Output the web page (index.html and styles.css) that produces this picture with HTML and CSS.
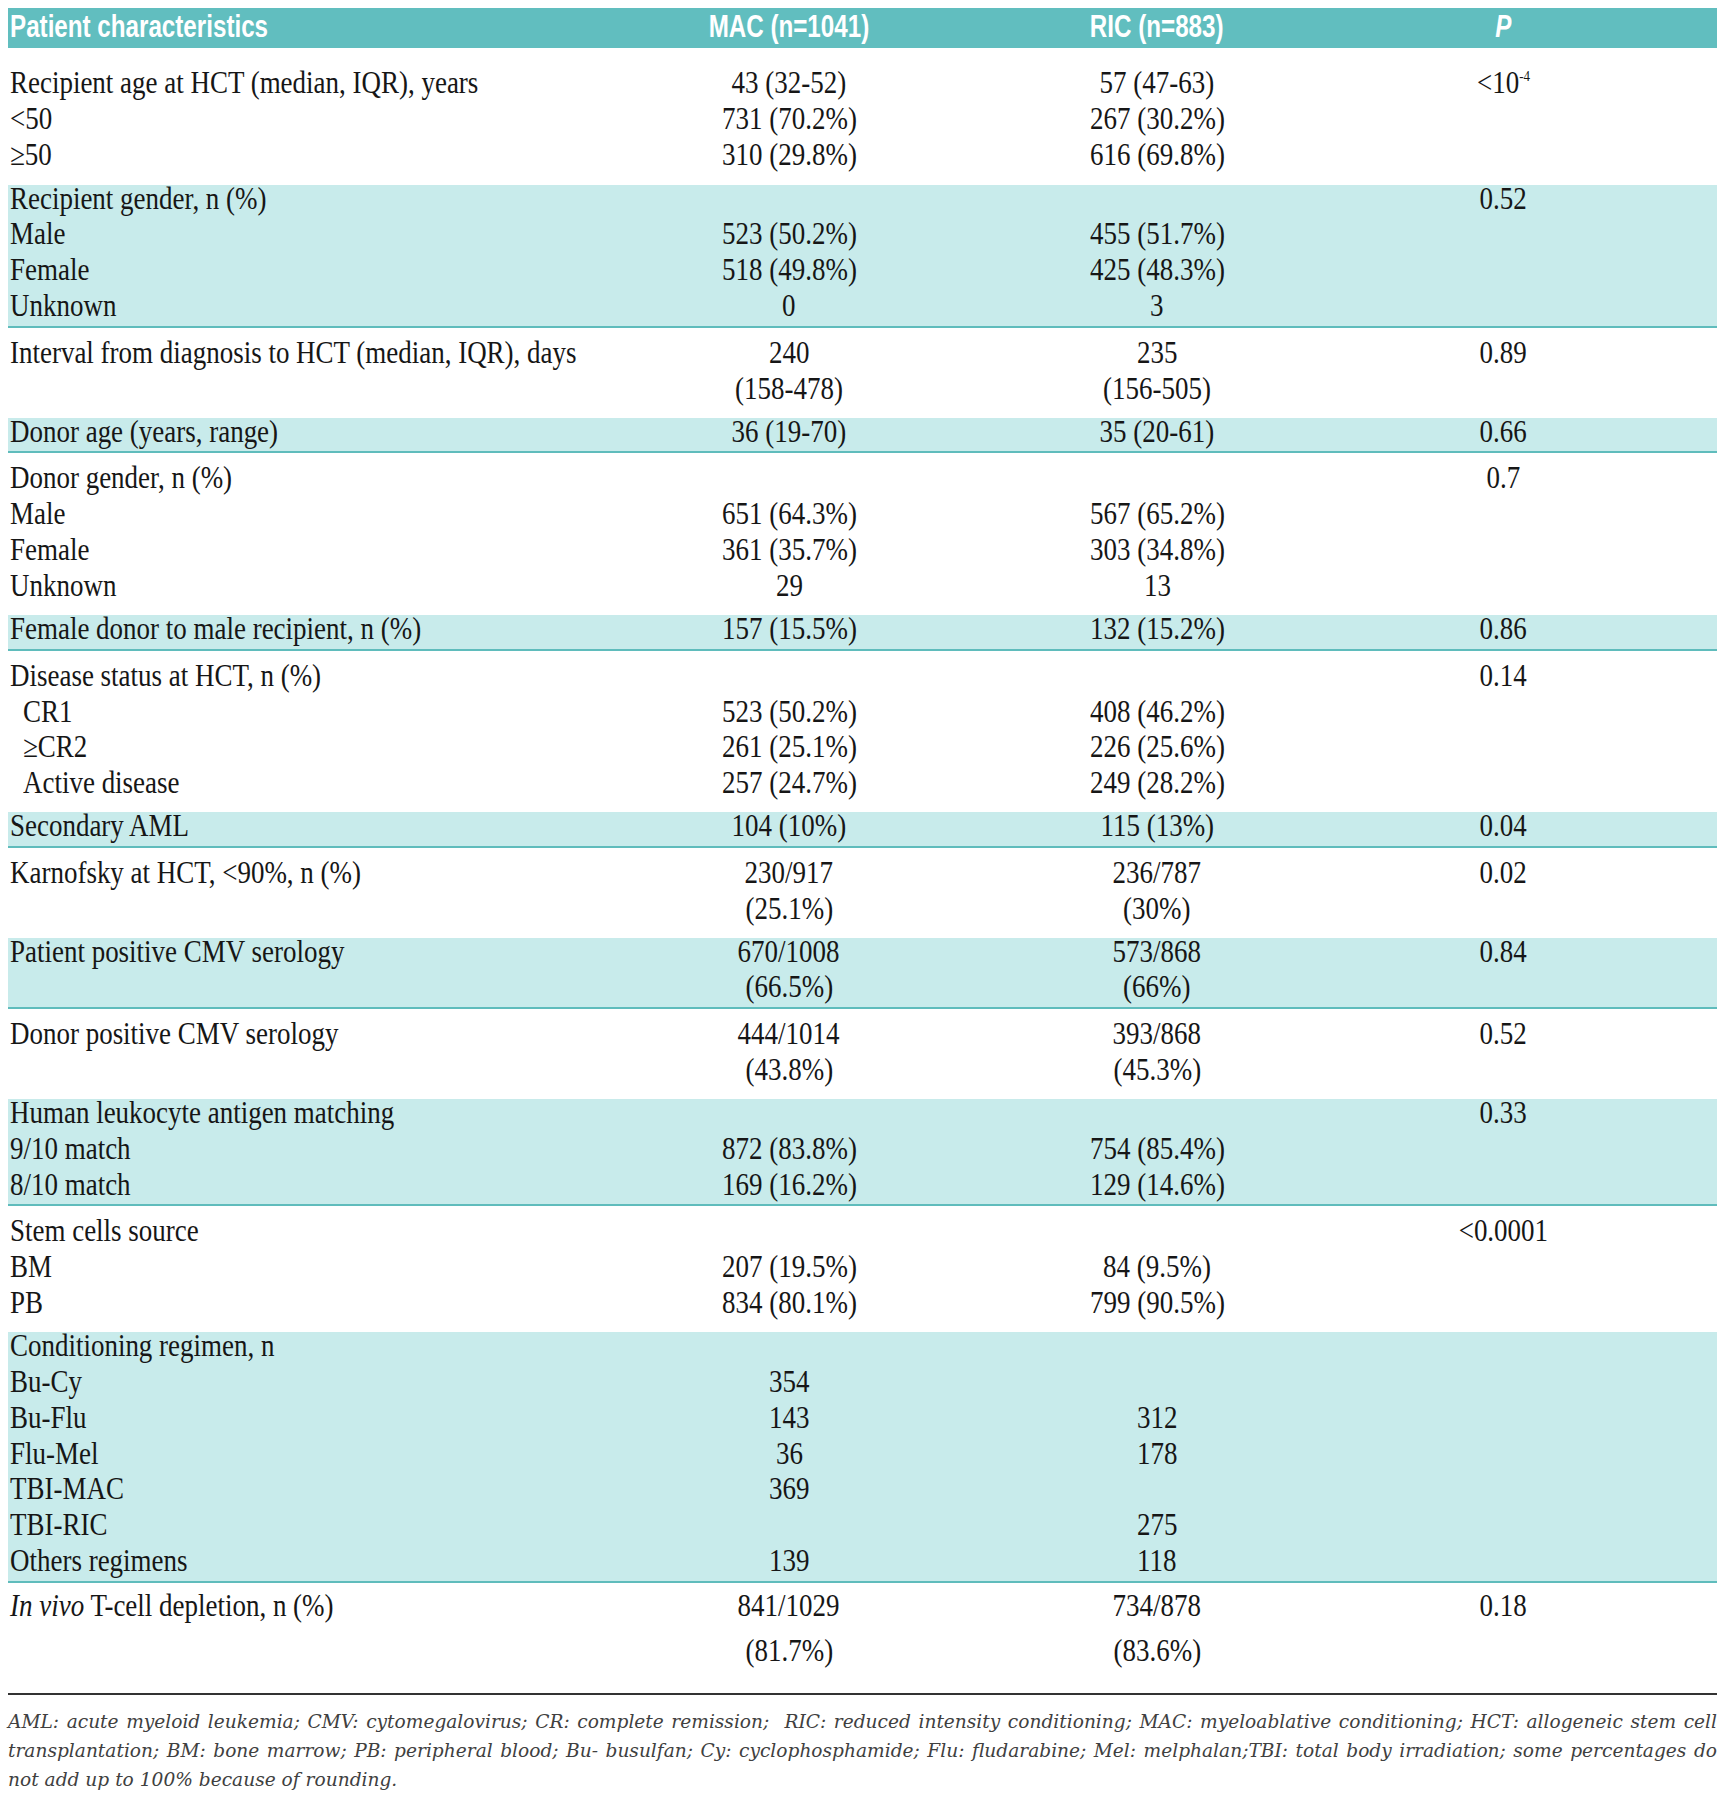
FILE: index.html
```html
<!DOCTYPE html>
<html lang="en">
<head>
<meta charset="utf-8">
<title>Patient characteristics</title>
<link rel="stylesheet" href="styles.css">
</head>
<body>
<div class="page">
  <div class="thead">
    <div class="hc lab"><span class="hs">Patient characteristics</span></div>
    <div class="hc"><span class="hs">MAC (n=1041)</span></div>
    <div class="hc"><span class="hs">RIC (n=883)</span></div>
    <div class="hc"><span class="hs"><i>P</i></span></div>
  </div>

  <div class="grp first">
    <div class="col lab">
      <div class="ln"><span class="t">Recipient age at HCT (median, IQR), years</span></div>
      <div class="ln"><span class="t">&lt;50</span></div>
      <div class="ln"><span class="t">≥50</span></div>
    </div>
    <div class="col">
      <div class="ln"><span class="t">43 (32-52)</span></div>
      <div class="ln"><span class="t">731 (70.2%)</span></div>
      <div class="ln"><span class="t">310 (29.8%)</span></div>
    </div>
    <div class="col">
      <div class="ln"><span class="t">57 (47-63)</span></div>
      <div class="ln"><span class="t">267 (30.2%)</span></div>
      <div class="ln"><span class="t">616 (69.8%)</span></div>
    </div>
    <div class="col">
      <div class="ln"><span class="t">&lt;10<sup>-4</sup></span></div>
    </div>
  </div>

  <div class="grp band">
    <div class="col lab">
      <div class="ln"><span class="t">Recipient gender, n (%)</span></div>
      <div class="ln"><span class="t">Male</span></div>
      <div class="ln"><span class="t">Female</span></div>
      <div class="ln"><span class="t">Unknown</span></div>
    </div>
    <div class="col">
      <div class="ln"></div>
      <div class="ln"><span class="t">523 (50.2%)</span></div>
      <div class="ln"><span class="t">518 (49.8%)</span></div>
      <div class="ln"><span class="t">0</span></div>
    </div>
    <div class="col">
      <div class="ln"></div>
      <div class="ln"><span class="t">455 (51.7%)</span></div>
      <div class="ln"><span class="t">425 (48.3%)</span></div>
      <div class="ln"><span class="t">3</span></div>
    </div>
    <div class="col">
      <div class="ln"><span class="t">0.52</span></div>
    </div>
  </div>

  <div class="grp plain">
    <div class="col lab">
      <div class="ln"><span class="t">Interval from diagnosis to HCT (median, IQR), days</span></div>
    </div>
    <div class="col">
      <div class="ln"><span class="t">240</span></div>
      <div class="ln"><span class="t">(158-478)</span></div>
    </div>
    <div class="col">
      <div class="ln"><span class="t">235</span></div>
      <div class="ln"><span class="t">(156-505)</span></div>
    </div>
    <div class="col">
      <div class="ln"><span class="t">0.89</span></div>
    </div>
  </div>

  <div class="grp band">
    <div class="col lab"><div class="ln"><span class="t">Donor age (years, range)</span></div></div>
    <div class="col"><div class="ln"><span class="t">36 (19-70)</span></div></div>
    <div class="col"><div class="ln"><span class="t">35 (20-61)</span></div></div>
    <div class="col"><div class="ln"><span class="t">0.66</span></div></div>
  </div>

  <div class="grp plain">
    <div class="col lab">
      <div class="ln"><span class="t">Donor gender, n (%)</span></div>
      <div class="ln"><span class="t">Male</span></div>
      <div class="ln"><span class="t">Female</span></div>
      <div class="ln"><span class="t">Unknown</span></div>
    </div>
    <div class="col">
      <div class="ln"></div>
      <div class="ln"><span class="t">651 (64.3%)</span></div>
      <div class="ln"><span class="t">361 (35.7%)</span></div>
      <div class="ln"><span class="t">29</span></div>
    </div>
    <div class="col">
      <div class="ln"></div>
      <div class="ln"><span class="t">567 (65.2%)</span></div>
      <div class="ln"><span class="t">303 (34.8%)</span></div>
      <div class="ln"><span class="t">13</span></div>
    </div>
    <div class="col">
      <div class="ln"><span class="t">0.7</span></div>
    </div>
  </div>

  <div class="grp band">
    <div class="col lab"><div class="ln"><span class="t">Female donor to male recipient, n (%)</span></div></div>
    <div class="col"><div class="ln"><span class="t">157 (15.5%)</span></div></div>
    <div class="col"><div class="ln"><span class="t">132 (15.2%)</span></div></div>
    <div class="col"><div class="ln"><span class="t">0.86</span></div></div>
  </div>

  <div class="grp plain">
    <div class="col lab">
      <div class="ln"><span class="t">Disease status at HCT, n (%)</span></div>
      <div class="ln sub"><span class="t">CR1</span></div>
      <div class="ln sub"><span class="t">≥CR2</span></div>
      <div class="ln sub"><span class="t">Active disease</span></div>
    </div>
    <div class="col">
      <div class="ln"></div>
      <div class="ln"><span class="t">523 (50.2%)</span></div>
      <div class="ln"><span class="t">261 (25.1%)</span></div>
      <div class="ln"><span class="t">257 (24.7%)</span></div>
    </div>
    <div class="col">
      <div class="ln"></div>
      <div class="ln"><span class="t">408 (46.2%)</span></div>
      <div class="ln"><span class="t">226 (25.6%)</span></div>
      <div class="ln"><span class="t">249 (28.2%)</span></div>
    </div>
    <div class="col">
      <div class="ln"><span class="t">0.14</span></div>
    </div>
  </div>

  <div class="grp band">
    <div class="col lab"><div class="ln"><span class="t">Secondary AML</span></div></div>
    <div class="col"><div class="ln"><span class="t">104 (10%)</span></div></div>
    <div class="col"><div class="ln"><span class="t">115 (13%)</span></div></div>
    <div class="col"><div class="ln"><span class="t">0.04</span></div></div>
  </div>

  <div class="grp plain">
    <div class="col lab"><div class="ln"><span class="t">Karnofsky at HCT, &lt;90%, n (%)</span></div></div>
    <div class="col">
      <div class="ln"><span class="t">230/917</span></div>
      <div class="ln"><span class="t">(25.1%)</span></div>
    </div>
    <div class="col">
      <div class="ln"><span class="t">236/787</span></div>
      <div class="ln"><span class="t">(30%)</span></div>
    </div>
    <div class="col"><div class="ln"><span class="t">0.02</span></div></div>
  </div>

  <div class="grp band">
    <div class="col lab"><div class="ln"><span class="t">Patient positive CMV serology</span></div></div>
    <div class="col">
      <div class="ln"><span class="t">670/1008</span></div>
      <div class="ln"><span class="t">(66.5%)</span></div>
    </div>
    <div class="col">
      <div class="ln"><span class="t">573/868</span></div>
      <div class="ln"><span class="t">(66%)</span></div>
    </div>
    <div class="col"><div class="ln"><span class="t">0.84</span></div></div>
  </div>

  <div class="grp plain">
    <div class="col lab"><div class="ln"><span class="t">Donor positive CMV serology</span></div></div>
    <div class="col">
      <div class="ln"><span class="t">444/1014</span></div>
      <div class="ln"><span class="t">(43.8%)</span></div>
    </div>
    <div class="col">
      <div class="ln"><span class="t">393/868</span></div>
      <div class="ln"><span class="t">(45.3%)</span></div>
    </div>
    <div class="col"><div class="ln"><span class="t">0.52</span></div></div>
  </div>

  <div class="grp band">
    <div class="col lab">
      <div class="ln"><span class="t">Human leukocyte antigen matching</span></div>
      <div class="ln"><span class="t">9/10 match</span></div>
      <div class="ln"><span class="t">8/10 match</span></div>
    </div>
    <div class="col">
      <div class="ln"></div>
      <div class="ln"><span class="t">872 (83.8%)</span></div>
      <div class="ln"><span class="t">169 (16.2%)</span></div>
    </div>
    <div class="col">
      <div class="ln"></div>
      <div class="ln"><span class="t">754 (85.4%)</span></div>
      <div class="ln"><span class="t">129 (14.6%)</span></div>
    </div>
    <div class="col"><div class="ln"><span class="t">0.33</span></div></div>
  </div>

  <div class="grp plain">
    <div class="col lab">
      <div class="ln"><span class="t">Stem cells source</span></div>
      <div class="ln"><span class="t">BM</span></div>
      <div class="ln"><span class="t">PB</span></div>
    </div>
    <div class="col">
      <div class="ln"></div>
      <div class="ln"><span class="t">207 (19.5%)</span></div>
      <div class="ln"><span class="t">834 (80.1%)</span></div>
    </div>
    <div class="col">
      <div class="ln"></div>
      <div class="ln"><span class="t">84 (9.5%)</span></div>
      <div class="ln"><span class="t">799 (90.5%)</span></div>
    </div>
    <div class="col"><div class="ln"><span class="t">&lt;0.0001</span></div></div>
  </div>

  <div class="grp band">
    <div class="col lab">
      <div class="ln"><span class="t">Conditioning regimen, n</span></div>
      <div class="ln"><span class="t">Bu-Cy</span></div>
      <div class="ln"><span class="t">Bu-Flu</span></div>
      <div class="ln"><span class="t">Flu-Mel</span></div>
      <div class="ln"><span class="t">TBI-MAC</span></div>
      <div class="ln"><span class="t">TBI-RIC</span></div>
      <div class="ln"><span class="t">Others regimens</span></div>
    </div>
    <div class="col">
      <div class="ln"></div>
      <div class="ln"><span class="t">354</span></div>
      <div class="ln"><span class="t">143</span></div>
      <div class="ln"><span class="t">36</span></div>
      <div class="ln"><span class="t">369</span></div>
      <div class="ln"></div>
      <div class="ln"><span class="t">139</span></div>
    </div>
    <div class="col">
      <div class="ln"></div>
      <div class="ln"></div>
      <div class="ln"><span class="t">312</span></div>
      <div class="ln"><span class="t">178</span></div>
      <div class="ln"></div>
      <div class="ln"><span class="t">275</span></div>
      <div class="ln"><span class="t">118</span></div>
    </div>
    <div class="col"></div>
  </div>

  <div class="grp last">
    <div class="col lab"><div class="ln"><span class="t"><i>In vivo</i> T-cell depletion, n (%)</span></div></div>
    <div class="col">
      <div class="ln"><span class="t">841/1029</span></div>
      <div class="ln"><span class="t">(81.7%)</span></div>
    </div>
    <div class="col">
      <div class="ln"><span class="t">734/878</span></div>
      <div class="ln"><span class="t">(83.6%)</span></div>
    </div>
    <div class="col"><div class="ln"><span class="t">0.18</span></div></div>
  </div>

  <div class="notes">
    <div class="nl">AML: acute myeloid leukemia; CMV: cytomegalovirus; CR: complete remission;&nbsp; RIC: reduced intensity conditioning; MAC: myeloablative conditioning; HCT: allogeneic stem cell</div>
    <div class="nl">transplantation; BM: bone marrow; PB: peripheral blood; Bu- busulfan; Cy: cyclophosphamide; Flu: fludarabine; Mel: melphalan;TBI: total body irradiation; some percentages do</div>
    <div class="nl end">not add up to 100% because of rounding.</div>
  </div>
</div>
</body>
</html>
```

FILE: styles.css
```css
html, body {
  margin: 0;
  padding: 0;
  background: #ffffff;
}

.page {
  width: 1709px;
  margin: 8px 0 0 8px;
  color: #161616;
  font-family: "Liberation Serif", "Times New Roman", serif;
  font-size: 31px;
}

.thead,
.grp {
  display: grid;
  grid-template-columns: 597px 368px 368px 324px;
  padding-right: 52px;
}

/* header band */
.thead {
  height: 40px;
  background: #61bebf;
  color: #ffffff;
  font-family: "Liberation Sans", Arial, sans-serif;
  font-weight: bold;
  font-size: 31px;
  line-height: 38px;
}

.hc {
  text-align: center;
  white-space: nowrap;
}

.hc.lab {
  text-align: left;
  padding-left: 2px;
}

.hs {
  display: inline-block;
  transform: scaleX(0.78);
  transform-origin: 50% 50%;
}

.hc.lab .hs {
  transform-origin: 0 50%;
}

.hs i {
  font-style: italic;
}

/* body rows */
.col {
  text-align: center;
}

.col.lab {
  text-align: left;
  padding-left: 2px;
}

.ln {
  height: 35.85px;
  line-height: 35.85px;
  white-space: nowrap;
}

.ln.sub {
  padding-left: 13px;
}

.t {
  display: inline-block;
  transform: scaleX(0.87);
  transform-origin: 50% 50%;
}

.lab .t {
  transform-origin: 0 50%;
}

.t sup {
  font-size: 15px;
  line-height: 0;
  vertical-align: 12px;
}

.first {
  padding: 17px 52px 12px 0;
}

.plain {
  padding: 7px 52px 11px 0;
}

.band {
  background: #c8ebeb;
  border-bottom: 2px solid #5fbcbc;
  padding-bottom: 2px;
}

.band > .col {
  margin-top: -4px;
}

.last {
  padding: 0 52px 20px 0;
  border-bottom: 2px solid #333333;
}

.last .ln {
  height: 45px;
  line-height: 45px;
}

/* footnote */
.notes {
  padding-top: 12px;
  font-family: "DejaVu Serif", serif;
  font-style: italic;
  font-size: 18.6px;
  line-height: 29px;
  color: #404040;
}

.nl {
  white-space: nowrap;
  text-align: justify;
  text-align-last: justify;
}

.nl.end {
  text-align-last: left;
}
```
